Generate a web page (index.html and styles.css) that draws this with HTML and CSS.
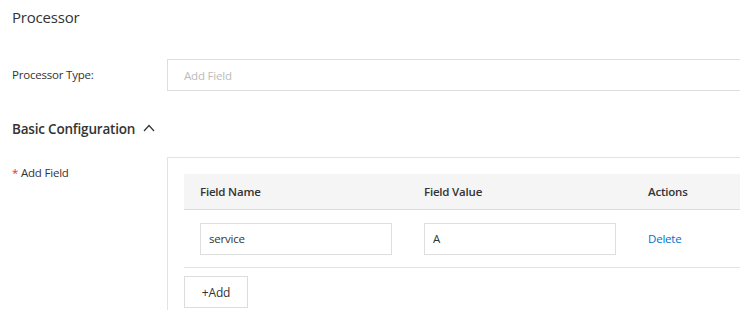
FILE: index.html
```html
<!DOCTYPE html>
<html lang="en">
<head>
    <meta charset="UTF-8">
    <meta name="viewport" content="width=device-width, initial-scale=1.0">
    <title>Processor</title>
    <link rel="stylesheet" href="styles.css">
</head>
<body>

    <div class="page">
        <h2 class="page-title">Processor</h2>

        <div class="form-row">
            <label class="form-label">Processor Type:</label>
            <div class="form-control">
                <input type="text" class="input input-wide" placeholder="Add Field">
            </div>
        </div>

        <div class="section-title">
            Basic Configuration
            <svg class="chevron" width="12" height="8" viewBox="0 0 12 8">
                <path d="M1 7 L6 1.5 L11 7" fill="none" stroke="#333" stroke-width="1.2"/>
            </svg>
        </div>

        <div class="form-row form-row-top">
            <label class="form-label"><span class="required">*</span> Add Field</label>
            <div class="field-box">
                <div class="field-table">
                    <div class="table-head">
                        <div class="cell">Field Name</div>
                        <div class="cell">Field Value</div>
                        <div class="cell">Actions</div>
                    </div>
                    <div class="table-row">
                        <div class="cell"><input type="text" class="input" value="service"></div>
                        <div class="cell"><input type="text" class="input" value="A"></div>
                        <div class="cell"><a href="#" class="link">Delete</a></div>
                    </div>
                </div>
                <button class="btn">+Add</button>
            </div>
        </div>
    </div>

</body>
</html>
```

FILE: styles.css
```css
html, body {
    overflow: hidden;
}

body {
    margin: 0;
    font-family: "Open Sans", "Noto Sans", sans-serif;
    letter-spacing: -0.2px;
    color: #333;
    background-color: #fff;
}

.page {
    padding: 5px 0 0 12px;
}

.page-title {
    margin: 0;
    font-size: 15px;
    font-weight: normal;
    line-height: 24px;
}

.form-row {
    display: flex;
    align-items: center;
    margin-top: 30px;
}

.form-row-top {
    align-items: flex-start;
    margin-top: 17px;
}

.form-label {
    width: 155px;
    font-size: 11.5px;
    line-height: 32px;
    flex-shrink: 0;
}

.required {
    color: #e62e2e;
}

.form-control {
    flex: 1;
}

.input {
    box-sizing: border-box;
    height: 32px;
    width: 192px;
    padding: 0 8px;
    border: 1px solid #dedede;
    border-radius: 0;
    font-family: inherit;
    font-size: 11.5px;
    letter-spacing: -0.2px;
    color: #333;
    outline: none;
    background: #fff;
}

.input::placeholder {
    color: #bbb;
}

.input-wide {
    width: 100%;
    padding: 0 16px;
    border-right: none;
}

.section-title {
    margin-top: 27px;
    font-size: 13.5px;
    font-weight: 600;
    line-height: 22px;
    display: flex;
    align-items: center;
    gap: 8px;
}

.chevron {
    margin-top: -2px;
}

.field-box {
    flex: 1;
    border: 1px solid #e3e3e3;
    border-bottom: none;
    border-right: none;
    padding: 16px 0 2px 16px;
}

.field-table {
    display: grid;
    grid-template-columns: 224px 224px 1fr;
}

.table-head, .table-row {
    display: contents;
}

.table-head .cell {
    background-color: #f5f5f5;
    height: 35px;
    line-height: 35px;
    border-bottom: 1px solid #dcdcdc;
    font-size: 11.5px;
    font-weight: 600;
    padding-left: 16px;
}

.table-row .cell {
    display: flex;
    align-items: center;
    box-sizing: border-box;
    height: 58px;
    border-bottom: 1px solid #e3e3e3;
    padding-left: 16px;
}

.link {
    color: #0070cc;
    font-size: 11.5px;
    text-decoration: none;
}

.btn {
    display: block;
    margin-top: 8px;
    height: 32px;
    width: 64px;
    border: 1px solid #dcdcdc;
    background: #fff;
    font-family: inherit;
    font-size: 12px;
    letter-spacing: -0.2px;
    color: #333;
    padding: 0;
}
```
